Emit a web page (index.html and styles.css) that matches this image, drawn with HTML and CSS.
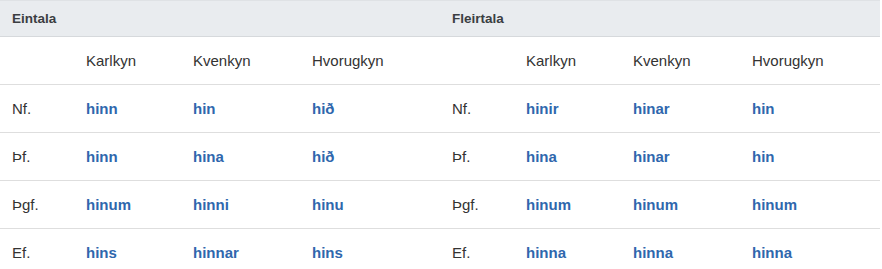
FILE: index.html
```html
<!DOCTYPE html>
<html lang="is">
<head>
<meta charset="utf-8">
<title>hinn</title>
<link rel="stylesheet" href="styles.css">
</head>
<body>
<div class="wrap">
  <table class="decl">
    <colgroup><col class="c0"><col class="c1"><col class="c2"><col class="c3"></colgroup>
    <thead>
      <tr class="group"><th colspan="4">Eintala</th></tr>
      <tr class="genders"><td></td><td>Karlkyn</td><td>Kvenkyn</td><td>Hvorugkyn</td></tr>
    </thead>
    <tbody>
      <tr><td class="case">Nf.</td><td><a>hinn</a></td><td><a>hin</a></td><td><a>hið</a></td></tr>
      <tr><td class="case">Þf.</td><td><a>hinn</a></td><td><a>hina</a></td><td><a>hið</a></td></tr>
      <tr><td class="case">Þgf.</td><td><a>hinum</a></td><td><a>hinni</a></td><td><a>hinu</a></td></tr>
      <tr><td class="case">Ef.</td><td><a>hins</a></td><td><a>hinnar</a></td><td><a>hins</a></td></tr>
    </tbody>
  </table>
  <table class="decl">
    <colgroup><col class="c0"><col class="c1"><col class="c2"><col class="c3"></colgroup>
    <thead>
      <tr class="group"><th colspan="4">Fleirtala</th></tr>
      <tr class="genders"><td></td><td>Karlkyn</td><td>Kvenkyn</td><td>Hvorugkyn</td></tr>
    </thead>
    <tbody>
      <tr><td class="case">Nf.</td><td><a>hinir</a></td><td><a>hinar</a></td><td><a>hin</a></td></tr>
      <tr><td class="case">Þf.</td><td><a>hina</a></td><td><a>hinar</a></td><td><a>hin</a></td></tr>
      <tr><td class="case">Þgf.</td><td><a>hinum</a></td><td><a>hinum</a></td><td><a>hinum</a></td></tr>
      <tr><td class="case">Ef.</td><td><a>hinna</a></td><td><a>hinna</a></td><td><a>hinna</a></td></tr>
    </tbody>
  </table>
</div>
</body>
</html>
```
FILE: styles.css
```css
html, body {
  margin: 0;
  padding: 0;
  background: #ffffff;
}
body {
  font-family: "Liberation Sans", Arial, sans-serif;
  color: #333333;
}
.wrap {
  display: flex;
  width: 880px;
}
.decl {
  width: 440px;
  border-collapse: collapse;
  table-layout: fixed;
}
.c0 { width: 86px; }
.c1 { width: 107px; }
.c2 { width: 119px; }
.c3 { width: 128px; }
.decl td, .decl th {
  padding: 0;
  vertical-align: middle;
  text-align: left;
}
.group th {
  height: 35px;
  background: #e9ecef;
  border-top: 1px solid #dfe2e5;
  border-bottom: 1px solid #d6d9dc;
  padding-left: 12px;
  font-size: 13.5px;
  font-weight: bold;
  color: #3b3e42;
}
.genders td, .decl tbody td {
  height: 47px;
  border-bottom: 1px solid #dedede;
  font-size: 15px;
  color: #333333;
}
.decl tbody tr:last-child td {
  border-bottom: none;
}
.decl td:first-child {
  padding-left: 12px;
}
.decl a {
  color: #2f67ad;
  font-weight: bold;
  text-decoration: none;
}
```
